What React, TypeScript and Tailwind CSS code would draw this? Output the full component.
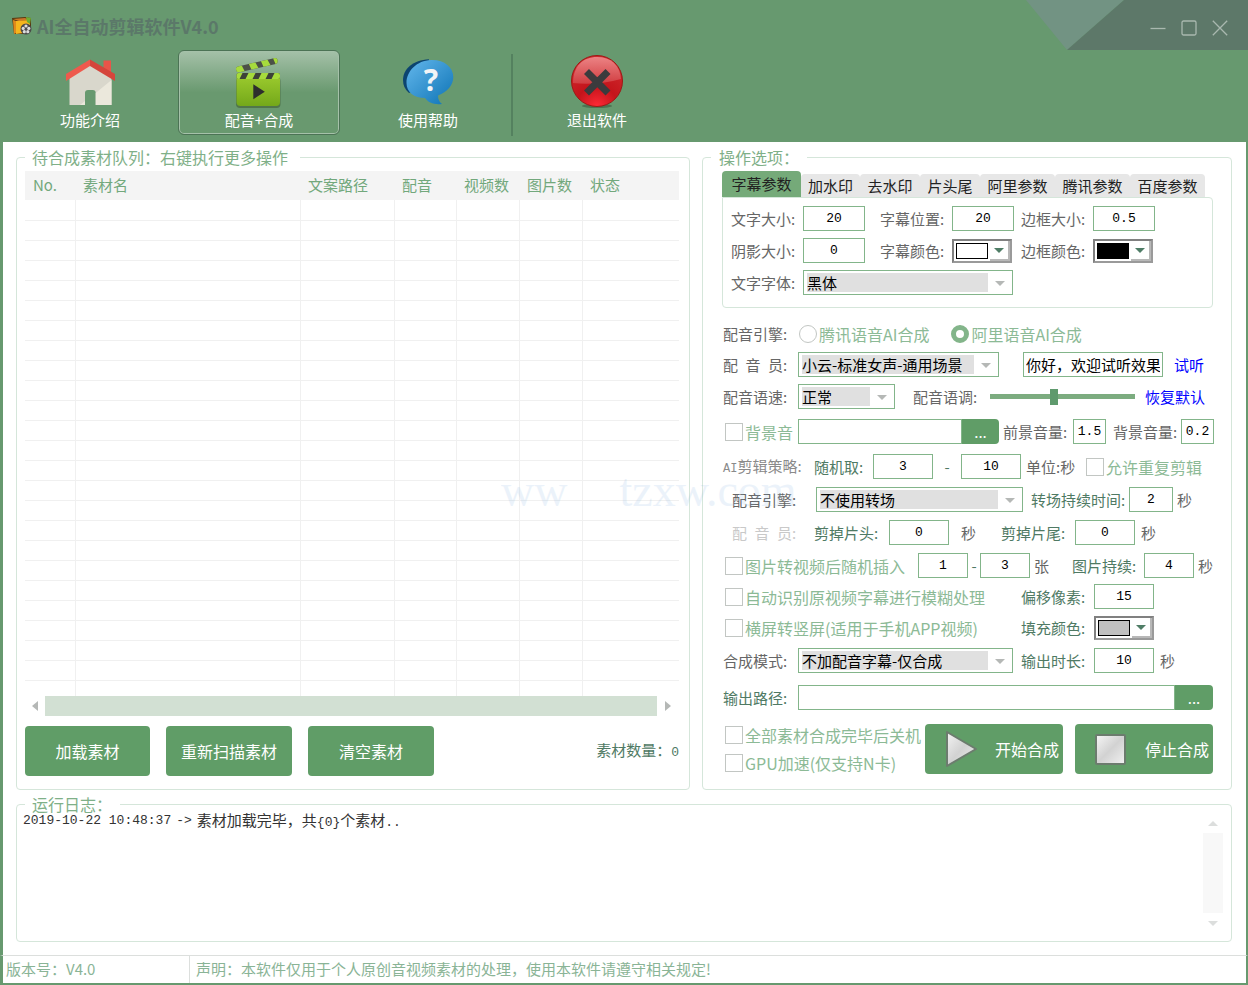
import React, { useState } from "react";

const columns = [
  { name: "No.", width: "w-[50px]" },
  { name: "素材名", width: "w-[225px]" },
  { name: "文案路径", width: "w-[94px]" },
  { name: "配音", width: "w-[62px]" },
  { name: "视频数", width: "w-[63px]" },
  { name: "图片数", width: "w-[63px]" },
  { name: "状态", width: "" },
];

const tabs = [
  { name: "字幕参数", width: "w-[79px]" },
  { name: "加水印", width: "w-[59px]" },
  { name: "去水印", width: "w-[60px]" },
  { name: "片头尾", width: "w-[60px]" },
  { name: "阿里参数", width: "w-[75px]" },
  { name: "腾讯参数", width: "w-[75px]" },
  { name: "百度参数", width: "w-[75px]" },
];

const emptyRows = Array.from({ length: 24 }, (_, i) => i);

/* ---------- icons ---------- */

const AppLogo = () => (
  <svg viewBox="0 0 20 20" className="h-5 w-5">
    <path d="M0 2l13-1 6 1v13l-5 3H2z" fill="#5a3a10" />
    <path d="M1 3l12-1 5 2-11 1z" fill="#c9762a" />
    <path d="M1 4l3 1v12l-2 1z" fill="#e08a1c" />
    <path d="M4 5l14-1v12L4 18z" fill="#f5b61d" />
    <path d="M14 1l5 1-1 6-3-2z" fill="#6fae2f" />
    <circle cx="14" cy="13" r="5.5" fill="#4a4a4a" />
    <circle cx="14" cy="10" r="1.6" fill="#ddd" />
    <circle cx="11.2" cy="12.4" r="1.6" fill="#ddd" />
    <circle cx="16.8" cy="12.4" r="1.6" fill="#ddd" />
    <circle cx="12.3" cy="15.7" r="1.6" fill="#ddd" />
    <circle cx="15.8" cy="15.7" r="1.6" fill="#ddd" />
  </svg>
);

const HomeIcon = () => (
  <svg viewBox="0 0 54 54" className="h-[54px] w-[54px]">
    <path d="M40.500 6.500h7.500v13l-7.500-6z" fill="#e85549" />
    <path d="M6.500 22L27 9l21.500 13v29H32.700V39q0-3-3-3H25q-3 0-3 3v12H6.500z" fill="#d9d7cc" />
    <path d="M48.500 26v25H32.700V39zM22 47v4h-5z" fill="#ebe8dc" />
    <path d="M3 20L27 5.500V12L3 27z" fill="#ee5a4d" />
    <path d="M52 20L27 5.500V12L52 27z" fill="#d5453b" />
  </svg>
);

const ClapperIcon = () => (
  <svg viewBox="0 0 54 54" className="h-[54px] w-[54px]">
    <defs>
      <linearGradient id="clapBody" x1="0" y1="0" x2="0" y2="1">
        <stop offset="0" stopColor="#9ccb2e" />
        <stop offset="1" stopColor="#74a81a" />
      </linearGradient>
      <clipPath id="clapArm">
        <path d="M4 14.500q0-1.500 2-2L43 4q2.500 0 2.700 3 0 2.500-2 3L6.500 18.500Q4 18 4 14.500z" />
      </clipPath>
      <clipPath id="clapStrip">
        <rect x="4.500" y="19" width="43.500" height="6" rx="2" />
      </clipPath>
    </defs>
    <rect x="4" y="23" width="44.500" height="31" rx="4" fill="#3f5f34" opacity=".6" />
    <rect x="4.500" y="21" width="43.500" height="31" rx="4" fill="url(#clapBody)" />
    <g clipPath="url(#clapArm)">
      <rect width="54" height="20" fill="#4c5147" />
      <path d="M3 10l6 0 4 8-10 3zM16 8l6-2 5 9-7 2zM28 5l6-2 5 9-7 2zM40 2l8-1v10l-4 0z" fill="#a6dc3c" />
    </g>
    <g clipPath="url(#clapStrip)">
      <rect x="4" y="18" width="46" height="8" fill="#3d4238" />
      <path d="M4 18h7l-4 8H4zM17 18h7l-4 8h-7zM30 18h7l-4 8h-7zM43 18h7v8H39z" fill="#a6dc3c" />
    </g>
    <path d="M21.300 30.300v15l11.500-7.500z" fill="#2d2d2d" />
  </svg>
);

const HelpIcon = () => (
  <svg viewBox="0 0 54 54" className="h-[54px] w-[54px]">
    <defs>
      <linearGradient id="bubble" x1="0" y1="0" x2="1" y2="1">
        <stop offset="0" stopColor="#63b7ec" />
        <stop offset="1" stopColor="#0d73b5" />
      </linearGradient>
    </defs>
    <path d="M28 5.300C12 6 2 15 2 26q0 8 6 13l18-8z" fill="#0c4470" />
    <path
      d="M30 6C43 5.500 52.300 13 52.300 23c0 8-6 15-15.300 18.500 0 4 1.500 6.500 4 8.500-8 1-14-1.500-17-6C13 44 5.500 38 5.500 29 5.500 17 16 6.500 30 6z"
      fill="url(#bubble)"
    />
    <text x="30" y="37" textAnchor="middle" fontSize="30" fontWeight="700" fontFamily="Noto Sans, sans-serif" fill="#f1f4f6">
      ?
    </text>
  </svg>
);

const ExitIcon = () => (
  <svg viewBox="0 0 54 54" className="h-[54px] w-[54px]">
    <defs>
      <radialGradient id="exitBall" cx=".5" cy="1" r=".9">
        <stop offset="0" stopColor="#ff2a36" />
        <stop offset=".45" stopColor="#c4141b" />
        <stop offset="1" stopColor="#cf2a2e" />
      </radialGradient>
      <linearGradient id="exitShine" x1="0" y1="0" x2="0" y2="1">
        <stop offset="0" stopColor="#f5a0a0" />
        <stop offset="1" stopColor="#d4494c" />
      </linearGradient>
    </defs>
    <ellipse cx="27" cy="52" rx="15" ry="2" fill="#3b5a3f" opacity=".6" />
    <circle cx="27" cy="27" r="25.500" fill="url(#exitBall)" stroke="#9c1a16" />
    <path d="M3 29C3 12 13 3 27 3s23 8 24 22c-14 4-32 6-48 4z" fill="url(#exitShine)" opacity=".75" />
    <path d="M16.500 17.500L38 39M38 17.500L16.500 39" stroke="#3b3b3d" strokeWidth="7" />
  </svg>
);

const PlayIcon = () => (
  <svg viewBox="0 0 34 38" className="h-[38px] w-[34px]">
    <defs>
      <linearGradient id="silver" x1="0" y1="0" x2="1" y2="1">
        <stop offset="0" stopColor="#f4f4f4" />
        <stop offset=".5" stopColor="#d2d2d2" />
        <stop offset="1" stopColor="#efefef" />
      </linearGradient>
    </defs>
    <path d="M2 2v34l29-17z" fill="url(#silver)" stroke="#6c7c6e" strokeWidth="2" strokeLinejoin="round" />
  </svg>
);

const StopIcon = () => (
  <svg viewBox="0 0 34 38" className="h-[38px] w-[34px]">
    <rect x="0" y="4" width="31" height="31" rx="2" fill="#6c7c6e" />
    <rect x="2" y="6" width="27" height="27" fill="url(#silver)" />
  </svg>
);

const Arrow = ({ dir, color = "#b5b8b6" }: { dir: "up" | "down" | "left" | "right"; color?: string }) => {
  const points = {
    up: "1,9 6,4 11,9",
    down: "1,4 6,9 11,4",
    left: "9,1 3,6 9,11",
    right: "3,1 9,6 3,11",
  };
  return (
    <svg viewBox="0 0 12 12" className="h-3 w-3 shrink-0">
      <polygon points={points[dir]} fill={color} />
    </svg>
  );
};

/* ---------- form parts ---------- */

const NumberBox = ({ label, value, width = "w-[60px]" }: { label: string; value: string; width?: string }) => (
  <input
    type="text"
    aria-label={label}
    defaultValue={value}
    className={`h-[25px] shrink-0 border border-[#83b58a] bg-white text-center font-['Liberation_Mono',monospace] text-[13px] text-black outline-none ${width}`}
  />
);

const Text = ({ children, width = "", tone = "text-[#666]" }: { children: React.ReactNode; width?: string; tone?: string }) => (
  <span className={`shrink-0 whitespace-pre ${width} ${tone}`}>{children}</span>
);

const Select = ({ label, options, width }: { label: string; options: string[]; width: string }) => (
  <div className={`flex h-[25px] shrink-0 items-center border border-[#83b58a] bg-white pl-[3px] ${width}`}>
    <select
      aria-label={label}
      className="h-[19px] min-w-0 flex-1 appearance-none bg-[#e0e0e0] text-[15px] leading-[19px] text-black outline-none"
    >
      {options.map((o) => (
        <option key={o}>{o}</option>
      ))}
    </select>
    <span className="flex w-6 justify-center">
      <Arrow dir="down" />
    </span>
  </div>
);

const ColorPicker = ({ label, swatch }: { label: string; swatch: string }) => (
  <button
    type="button"
    aria-label={label}
    className="flex h-6 w-[60px] shrink-0 items-stretch border-2 border-t-[#808080] border-r-[#9a9a9a] border-b-[#9a9a9a] border-l-[#808080] bg-white"
  >
    <span className={`m-0.5 flex-1 border border-black ${swatch}`} />
    <span className="flex w-5 items-center justify-center border-r-2 border-b-2 border-[#b8b8b8]">
      <Arrow dir="down" color="#4f7d66" />
    </span>
  </button>
);

const Check = ({ children }: { children: React.ReactNode }) => (
  <label className="flex shrink-0 items-center gap-0.5 pl-0.5 text-base leading-[18px] text-[#8cba96]">
    <input type="checkbox" className="h-[18px] w-[18px] appearance-none border border-[#c2c6c3] bg-white checked:bg-[#83b58a]" />
    {children}
  </label>
);

const green = "text-[#4f7a64]";

function SubtitlePanel() {
  return (
    <div className="flex flex-col gap-[7px] rounded-b rounded-tr border border-[#d5e6da] pt-2 pb-3 pl-2">
      <div className="grid h-[25px] grid-cols-[149px_141px_auto]">
        <div className="flex items-center">
          <Text width="w-[72px]">文字大小:</Text>
          <NumberBox label="文字大小" value="20" width="w-[62px]" />
        </div>
        <div className="flex items-center">
          <Text width="w-[72px]">字幕位置:</Text>
          <NumberBox label="字幕位置" value="20" width="w-[62px]" />
        </div>
        <div className="flex items-center">
          <Text width="w-[72px]">边框大小:</Text>
          <NumberBox label="边框大小" value="0.5" width="w-[62px]" />
        </div>
      </div>
      <div className="grid h-[25px] grid-cols-[149px_141px_auto]">
        <div className="flex items-center">
          <Text width="w-[72px]">阴影大小:</Text>
          <NumberBox label="阴影大小" value="0" width="w-[62px]" />
        </div>
        <div className="flex items-center">
          <Text width="w-[72px]">字幕颜色:</Text>
          <ColorPicker label="字幕颜色" swatch="bg-white" />
        </div>
        <div className="flex items-center">
          <Text width="w-[72px]">边框颜色:</Text>
          <ColorPicker label="边框颜色" swatch="bg-black" />
        </div>
      </div>
      <div className="flex h-[25px] items-center">
        <Text width="w-[72px]">文字字体:</Text>
        <Select label="文字字体" options={["黑体", "宋体"]} width="w-[210px]" />
      </div>
    </div>
  );
}

function Options() {
  const [tab, setTab] = useState("字幕参数");
  const [engine, setEngine] = useState("阿里语音AI合成");

  return (
    <fieldset className="w-[530px] min-w-0 shrink-0 rounded border border-[#d5e6da]">
      <legend className="ml-2 h-[18px] px-2 text-base leading-[18px] text-[#7fb088]">操作选项：</legend>
      <div className="pt-[5px] pr-[18px] pb-3.5 pl-[19px] text-[15px] leading-[18px]">
        <div className="flex h-[26px] items-end" role="tablist">
          {tabs.map((t) => (
            <button
              key={t.name}
              type="button"
              role="tab"
              aria-selected={t.name === tab}
              onClick={() => setTab(t.name)}
              className={`shrink-0 rounded-t whitespace-nowrap text-[#222] ${t.width} ${
                t.name === tab ? "h-[26px] bg-[#75aa79]" : "h-[23px] bg-[#e7e7e7]"
              }`}
            >
              {t.name}
            </button>
          ))}
        </div>
        <SubtitlePanel />

        <div className="mt-[13px] flex h-[25px] items-center pl-px">
          <Text width="w-[76px]">配音引擎:</Text>
          <div className="flex gap-[22px] text-base text-[#8cba96]">
            {["腾讯语音AI合成", "阿里语音AI合成"].map((name) => (
              <label key={name} className="flex items-center gap-0.5 whitespace-nowrap">
                <input
                  type="radio"
                  name="engine"
                  checked={engine === name}
                  onChange={() => setEngine(name)}
                  className="h-[18px] w-[18px] appearance-none rounded-full border border-[#c2c6c3] bg-white checked:border-[5px] checked:border-[#83b58a]"
                />
                {name}
              </label>
            ))}
          </div>
        </div>

        <div className="mt-1.5 flex h-[25px] items-center pl-px">
          <Text width="w-[75px]">配&ensp;音&ensp;员:</Text>
          <Select label="配音员" options={["小云-标准女声-通用场景"]} width="w-[201px]" />
          <input
            type="text"
            aria-label="试听文本"
            defaultValue="你好，欢迎试听效果"
            className="ml-6 h-[25px] w-[140px] border border-[#83b58a] px-0.5 text-[15px] text-black outline-none"
          />
          <a href="#" className="ml-[11px] text-[#0000ff]">试听</a>
        </div>

        <div className="mt-[7px] flex h-[25px] items-center pl-px">
          <Text width="w-[75px]">配音语速:</Text>
          <Select label="配音语速" options={["正常", "快", "慢"]} width="w-[97px]" />
          <span className="ml-[18px] w-[77px] shrink-0 text-[#666]">配音语调:</span>
          <input
            type="range"
            aria-label="配音语调"
            min={0}
            max={100}
            defaultValue={44}
            className="h-4 w-[145px] shrink-0 appearance-none bg-transparent [&::-webkit-slider-runnable-track]:h-[5px] [&::-webkit-slider-runnable-track]:bg-[#7cac80] [&::-webkit-slider-thumb]:-mt-[5px] [&::-webkit-slider-thumb]:h-4 [&::-webkit-slider-thumb]:w-2 [&::-webkit-slider-thumb]:appearance-none [&::-webkit-slider-thumb]:bg-[#5f9a6d]"
          />
          <a href="#" className="ml-2.5 whitespace-nowrap text-[#0000ff]">恢复默认</a>
        </div>

        <div className="mt-2.5 flex h-[25px] items-center pl-px">
          <span className="w-[75px] shrink-0">
            <Check>背景音</Check>
          </span>
          <input type="text" aria-label="背景音路径" className="h-[25px] w-[164px] shrink-0 border border-[#83b58a] outline-none" />
          <button type="button" className="h-[25px] w-[37px] shrink-0 rounded-r bg-[#609d67] text-white">...</button>
          <span className="ml-1 w-[70px] shrink-0 text-[#666]">前景音量:</span>
          <NumberBox label="前景音量" value="1.5" width="w-[33px]" />
          <span className="ml-[7px] w-[68px] shrink-0 text-[#666]">背景音量:</span>
          <NumberBox label="背景音量" value="0.2" width="w-[33px]" />
        </div>

        <div className="mt-2.5 flex h-[25px] items-center pl-px">
          <Text width="w-[91px]" tone="text-[#8a8a8a]">
            <span className="font-['Liberation_Mono',monospace] text-xs">AI</span>剪辑策略:
          </Text>
          <Text width="w-[59px]" tone={green}>随机取:</Text>
          <NumberBox label="随机取最小" value="3" />
          <span className={`w-7 text-center ${green}`}>-</span>
          <NumberBox label="随机取最大" value="10" />
          <span className="ml-[5px] w-[58px] shrink-0 text-[#666]">单位:秒</span>
          <Check>允许重复剪辑</Check>
        </div>

        <div className="mt-2 flex h-[25px] items-center pl-2.5">
          <Text width="w-[84px]">配音引擎:</Text>
          <Select label="转场" options={["不使用转场"]} width="w-[207px]" />
          <span className={`ml-2 w-[98px] shrink-0 ${green}`}>转场持续时间:</span>
          <NumberBox label="转场持续时间" value="2" width="w-[44px]" />
          <span className="ml-1 text-[#666]">秒</span>
        </div>

        <div className="mt-2 flex h-[25px] items-center pl-2.5">
          <Text width="w-[82px]" tone="text-[#c9c9c9]">配&ensp;音&ensp;员:</Text>
          <Text width="w-[75px]" tone={green}>剪掉片头:</Text>
          <NumberBox label="剪掉片头" value="0" />
          <span className="ml-3 w-10 text-[#666]">秒</span>
          <Text width="w-[74px]" tone={green}>剪掉片尾:</Text>
          <NumberBox label="剪掉片尾" value="0" />
          <span className="ml-1.5 text-[#666]">秒</span>
        </div>

        <div className="mt-2 flex h-[25px] items-center pl-px">
          <span className="w-[195px] shrink-0">
            <Check>图片转视频后随机插入</Check>
          </span>
          <NumberBox label="插入最少" value="1" width="w-[50px]" />
          <span className={`w-3 text-center ${green}`}>-</span>
          <NumberBox label="插入最多" value="3" width="w-[50px]" />
          <span className="ml-1 w-[38px] text-[#666]">张</span>
          <Text width="w-[72px]" tone={green}>图片持续:</Text>
          <NumberBox label="图片持续" value="4" width="w-[50px]" />
          <span className="ml-1 text-[#666]">秒</span>
        </div>

        <div className="mt-1.5 flex h-[25px] items-center pl-px">
          <span className="w-[298px] shrink-0">
            <Check>自动识别原视频字幕进行模糊处理</Check>
          </span>
          <Text width="w-[73px]" tone={green}>偏移像素:</Text>
          <NumberBox label="偏移像素" value="15" />
        </div>

        <div className="mt-1.5 flex h-[25px] items-center pl-px">
          <span className="w-[298px] shrink-0">
            <Check>横屏转竖屏(适用于手机APP视频)</Check>
          </span>
          <Text width="w-[73px]" tone={green}>填充颜色:</Text>
          <ColorPicker label="填充颜色" swatch="bg-[#c0c0c0]" />
        </div>

        <div className="mt-2 flex h-[25px] items-center pl-px">
          <Text width="w-[75px]">合成模式:</Text>
          <Select label="合成模式" options={["不加配音字幕-仅合成"]} width="w-[215px]" />
          <span className={`ml-2 w-[73px] shrink-0 ${green}`}>输出时长:</span>
          <NumberBox label="输出时长" value="10" />
          <span className="ml-1.5 text-[#666]">秒</span>
        </div>

        <div className="mt-3 flex h-[25px] items-center pl-px">
          <Text width="w-[75px]" tone={green}>输出路径:</Text>
          <input type="text" aria-label="输出路径" className="h-[25px] min-w-0 flex-1 border border-[#83b58a] outline-none" />
          <button type="button" className="h-[25px] w-[38px] rounded-r bg-[#609d67] text-white">...</button>
        </div>

        <div className="mt-3.5 flex h-[50px] items-start pl-px">
          <div className="flex w-[202px] shrink-0 flex-col gap-2.5 pt-0.5 whitespace-nowrap">
            <Check>全部素材合成完毕后关机</Check>
            <Check>GPU加速(仅支持N卡)</Check>
          </div>
          <div className="flex flex-1 gap-3 text-base text-white">
            <button type="button" className="flex h-[50px] flex-1 items-center justify-between rounded bg-[#609d67] pr-1 pl-5">
              <PlayIcon />
              开始合成
            </button>
            <button type="button" className="flex h-[50px] flex-1 items-center justify-between rounded bg-[#609d67] pr-1 pl-5">
              <StopIcon />
              停止合成
            </button>
          </div>
        </div>
      </div>
    </fieldset>
  );
}

function MaterialQueue() {
  return (
    <fieldset className="min-w-0 flex-1 rounded border border-[#d5e6da]">
      <legend className="ml-2 h-[18px] pr-3 pl-[7px] text-base leading-[18px] text-[#7fb088]">待合成素材队列：右键执行更多操作</legend>
      <div className="pt-[5px] pr-2.5 pb-[13px] pl-2">
        <table className="w-full table-fixed border-collapse text-[15px]">
          <thead>
            <tr className="h-[29px] bg-[#f4f4f4] text-left text-[#72a87c]">
              {columns.map((c) => (
                <th key={c.name} className={`p-0 pl-2 font-normal whitespace-nowrap ${c.width}`}>
                  {c.name}
                </th>
              ))}
            </tr>
          </thead>
          <tbody>
            {emptyRows.map((row) => (
              <tr key={row} className="h-5 border-b border-[#f0f0f0]">
                {columns.map((c) => (
                  <td key={c.name} className="border-r border-[#f0f0f0] p-0 last:border-r-0" />
                ))}
              </tr>
            ))}
            <tr className="h-4">
              {columns.map((c) => (
                <td key={c.name} className="border-r border-[#f0f0f0] p-0 last:border-r-0" />
              ))}
            </tr>
          </tbody>
        </table>
        <div className="flex h-5 items-center">
          <span className="flex w-5 justify-center">
            <Arrow dir="left" />
          </span>
          <div className="h-5 flex-1 bg-[#d2e0d3]" />
          <span className="flex w-[22px] justify-center">
            <Arrow dir="right" />
          </span>
        </div>
        <div className="mt-2.5 flex items-center gap-4 text-base text-white">
          <button type="button" className="h-[50px] w-[125px] rounded bg-[#609d67]">加载素材</button>
          <button type="button" className="h-[50px] w-[126px] rounded bg-[#609d67]">重新扫描素材</button>
          <button type="button" className="h-[50px] w-[126px] rounded bg-[#609d67]">清空素材</button>
          <span className="ml-auto text-[15px] text-[#4f7a64]">
            素材数量：<span className="font-['Liberation_Mono',monospace] text-[13px]">0</span>
          </span>
        </div>
      </div>
    </fieldset>
  );
}

const ToolButton = ({ icon, text, active = false }: { icon: React.ReactNode; text: string; active?: boolean }) => (
  <button
    type="button"
    className={`flex h-[85px] w-[162px] shrink-0 flex-col items-center rounded-md border pt-[3px] text-[15px] leading-5 text-white ${
      active
        ? "border-[#4c7355] bg-gradient-to-b from-[#a5c1a9] via-[#69996f] to-[#69996f] ring-1 ring-[#a5c1a9] ring-inset"
        : "border-transparent"
    }`}
  >
    {icon}
    <span className="mt-0.5">{text}</span>
  </button>
);

function Header() {
  return (
    <header className="h-[142px] bg-[#67996f]">
      <div className="flex h-[50px] justify-between">
        <div className="flex items-center gap-[5px] pt-0.5 pl-3">
          <AppLogo />
          <h1 className="text-lg font-bold whitespace-nowrap text-[#5b7869]">AI全自动剪辑软件V4.0</h1>
        </div>
        <div className="relative h-[50px] w-[223px] shrink-0">
          <svg viewBox="0 0 223 50" className="absolute inset-0 h-full w-full">
            <path d="M1 0h98L42 50z" fill="#729383" />
            <path d="M99 0h124v50H42z" fill="#5d7869" />
          </svg>
          <div className="relative flex h-full items-center justify-end gap-[15px] pt-[5px] pr-5 text-[#a9b8af]">
            <button type="button" aria-label="最小化">
              <svg viewBox="0 0 16 16" className="h-4 w-4">
                <path d="M.5 8.500h15" stroke="currentColor" strokeWidth="1.300" />
              </svg>
            </button>
            <button type="button" aria-label="最大化">
              <svg viewBox="0 0 16 16" className="h-4 w-4">
                <rect x="1" y="1" width="14" height="14" rx="1.500" fill="none" stroke="currentColor" strokeWidth="1.300" />
              </svg>
            </button>
            <button type="button" aria-label="关闭">
              <svg viewBox="0 0 16 16" className="h-4 w-4">
                <path d="M.8 .8l14.400 14.400M15.200 .8L.8 15.200" stroke="currentColor" strokeWidth="1.300" />
              </svg>
            </button>
          </div>
        </div>
      </div>
      <nav className="flex pl-[9px]">
        <ToolButton icon={<HomeIcon />} text="功能介绍" />
        <div className="w-[7px]" />
        <ToolButton icon={<ClapperIcon />} text="配音+合成" active />
        <div className="w-[7px]" />
        <ToolButton icon={<HelpIcon />} text="使用帮助" />
        <div className="mx-0.5 mt-1 h-[82px] w-[3px] border-l-2 border-[#54815f]" />
        <ToolButton icon={<ExitIcon />} text="退出软件" />
      </nav>
    </header>
  );
}

function RunLog() {
  return (
    <fieldset className="flex min-w-0 flex-1 flex-col rounded border border-[#d5e6da]">
      <legend className="ml-2 h-[18px] pr-2 pl-[7px] text-base leading-[18px] text-[#7fb088]">运行日志：</legend>
      <div className="flex min-h-[128px] flex-1 justify-between pr-2 pl-1.5">
        <div role="log" className="flex h-4 items-center gap-[5px] text-[15px] leading-4 whitespace-nowrap text-[#333]">
          <span className="font-['Liberation_Mono',monospace] text-[13px]">2019-10-22 10:48:37</span>
          <span className="font-['Liberation_Mono',monospace] text-[13px]">-&gt;</span>
          <span>
            素材加载完毕，共<span className="font-['Liberation_Mono',monospace] text-[13px]">{"{0}"}</span>个素材
            <span className="font-['Liberation_Mono',monospace] text-[13px]">..</span>
          </span>
        </div>
        <div className="flex w-5 flex-col pb-2">
          <span className="flex h-5 items-center justify-center">
            <Arrow dir="up" color="#dcdedd" />
          </span>
          <div className="flex-1 bg-[#f8f8f8]" />
          <span className="flex h-5 items-center justify-center">
            <Arrow dir="down" color="#dcdedd" />
          </span>
        </div>
      </div>
    </fieldset>
  );
}

export default function App() {
  return (
    <div className="flex min-h-screen flex-col bg-white font-['Noto_Sans_CJK_SC',sans-serif]">
      <Header />
      <main className="relative flex flex-1 flex-col gap-[5px] border-r-2 border-l-[3px] border-[#67996f] pt-1.5 pr-3.5 pb-[13px] pl-[13px]">
        <div className="flex gap-3">
          <MaterialQueue />
          <Options />
        </div>
        <RunLog />
        {/* faded site mark over the panels */}
        <div
          aria-hidden="true"
          className="pointer-events-none absolute top-[322px] left-[498px] flex gap-[52px] font-['Liberation_Serif',serif] text-[46px] leading-[54px] text-[#7fb0e0] opacity-15"
        >
          <span>ww</span>
          <span>tzxw.com</span>
        </div>
      </main>
      <footer className="flex h-[30px] border-t border-r-2 border-b-2 border-l-[3px] border-t-[#dcdfdd] border-r-[#67996f] border-b-[#67996f] border-l-[#67996f] text-[15px] leading-[26px] whitespace-nowrap text-[#8ab496]">
        <span className="w-[187px] shrink-0 border-r border-[#dcdfdd] pl-[3px]">版本号：V4.0</span>
        <span className="pl-1.5">声明：本软件仅用于个人原创音视频素材的处理，使用本软件请遵守相关规定!</span>
      </footer>
    </div>
  );
}
